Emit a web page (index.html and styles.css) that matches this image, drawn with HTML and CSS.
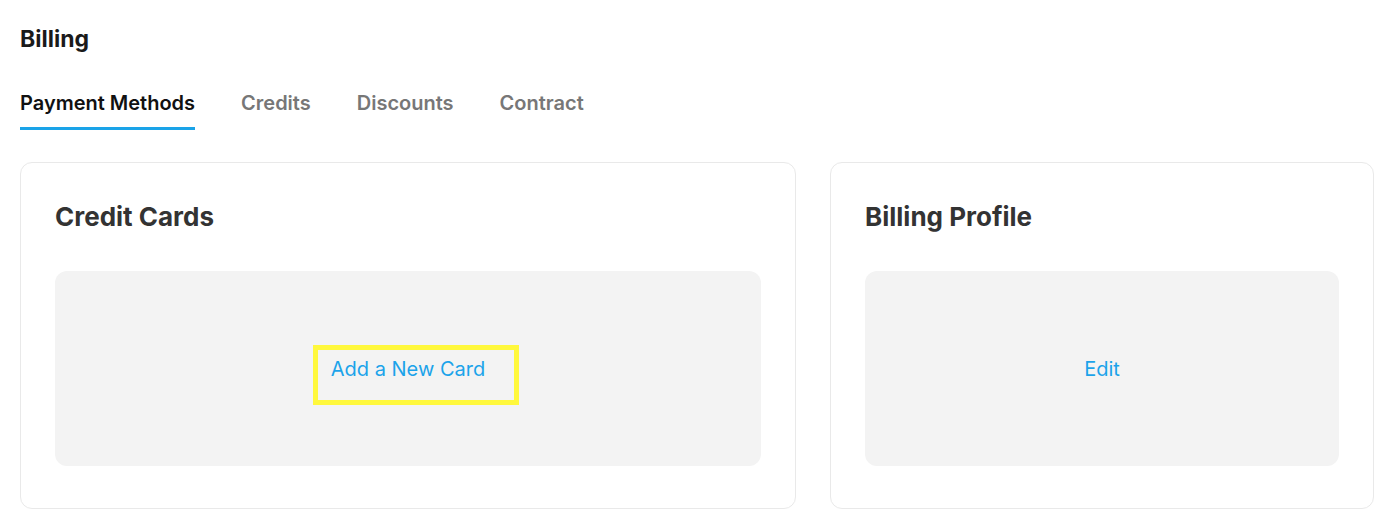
FILE: index.html
```html
<!DOCTYPE html>
<html>
<head>
<meta charset="utf-8">
<link rel="stylesheet" href="styles.css">
</head>
<body>
<div class="page">
  <h1 class="title">Billing</h1>
  <nav class="tabs">
    <a class="tab active">Payment Methods</a>
    <a class="tab">Credits</a>
    <a class="tab">Discounts</a>
    <a class="tab">Contract</a>
  </nav>
  <div class="cards">
    <section class="card card-main">
      <h2 class="card-title">Credit Cards</h2>
      <div class="panel">
        <a class="link highlighted">Add a New Card</a>
      </div>
    </section>
    <section class="card card-side">
      <h2 class="card-title">Billing Profile</h2>
      <div class="panel">
        <a class="link">Edit</a>
      </div>
    </section>
  </div>
</div>
</body>
</html>
```
FILE: styles.css
```css
*, *::before, *::after { box-sizing: border-box; }
html, body { margin: 0; padding: 0; background: #fff; }
body { font-family: Inter, "Noto Sans", sans-serif; color: #1a1a1a; }
.page { padding: 26px 26px 0 20px; }
.title { margin: 0; font-size: 23px; font-weight: 700; line-height: 26px; color: #1a1a1a; }
.tabs { display: flex; gap: 46px; margin-top: 38px; }
.tab { font-size: 20px; font-weight: 600; line-height: 26px; color: #777; padding-bottom: 11px; border-bottom: 3px solid transparent; cursor: pointer; }
.tab.active { color: #111; border-bottom-color: #1aa3e8; }
.cards { display: flex; gap: 34px; margin-top: 32px; }
.card { border: 1px solid #e9e9e9; border-radius: 12px; padding: 38px 34px 42px; background: #fff; }
.card-main { flex: 0 0 776px; }
.card-side { flex: 1; }
.card-title { margin: 0; font-size: 26px; font-weight: 700; line-height: 32px; color: #333; }
.panel { margin-top: 38px; height: 195px; background: #f3f3f3; border-radius: 12px; display: flex; align-items: center; justify-content: center; }
.link { font-size: 20px; line-height: 24px; color: #1ba3ea; position: relative; cursor: pointer; }
.highlighted::after { content: ""; position: absolute; left: -18px; top: -12px; width: 206px; height: 60px; border: 5px solid #fff83c; }
```
